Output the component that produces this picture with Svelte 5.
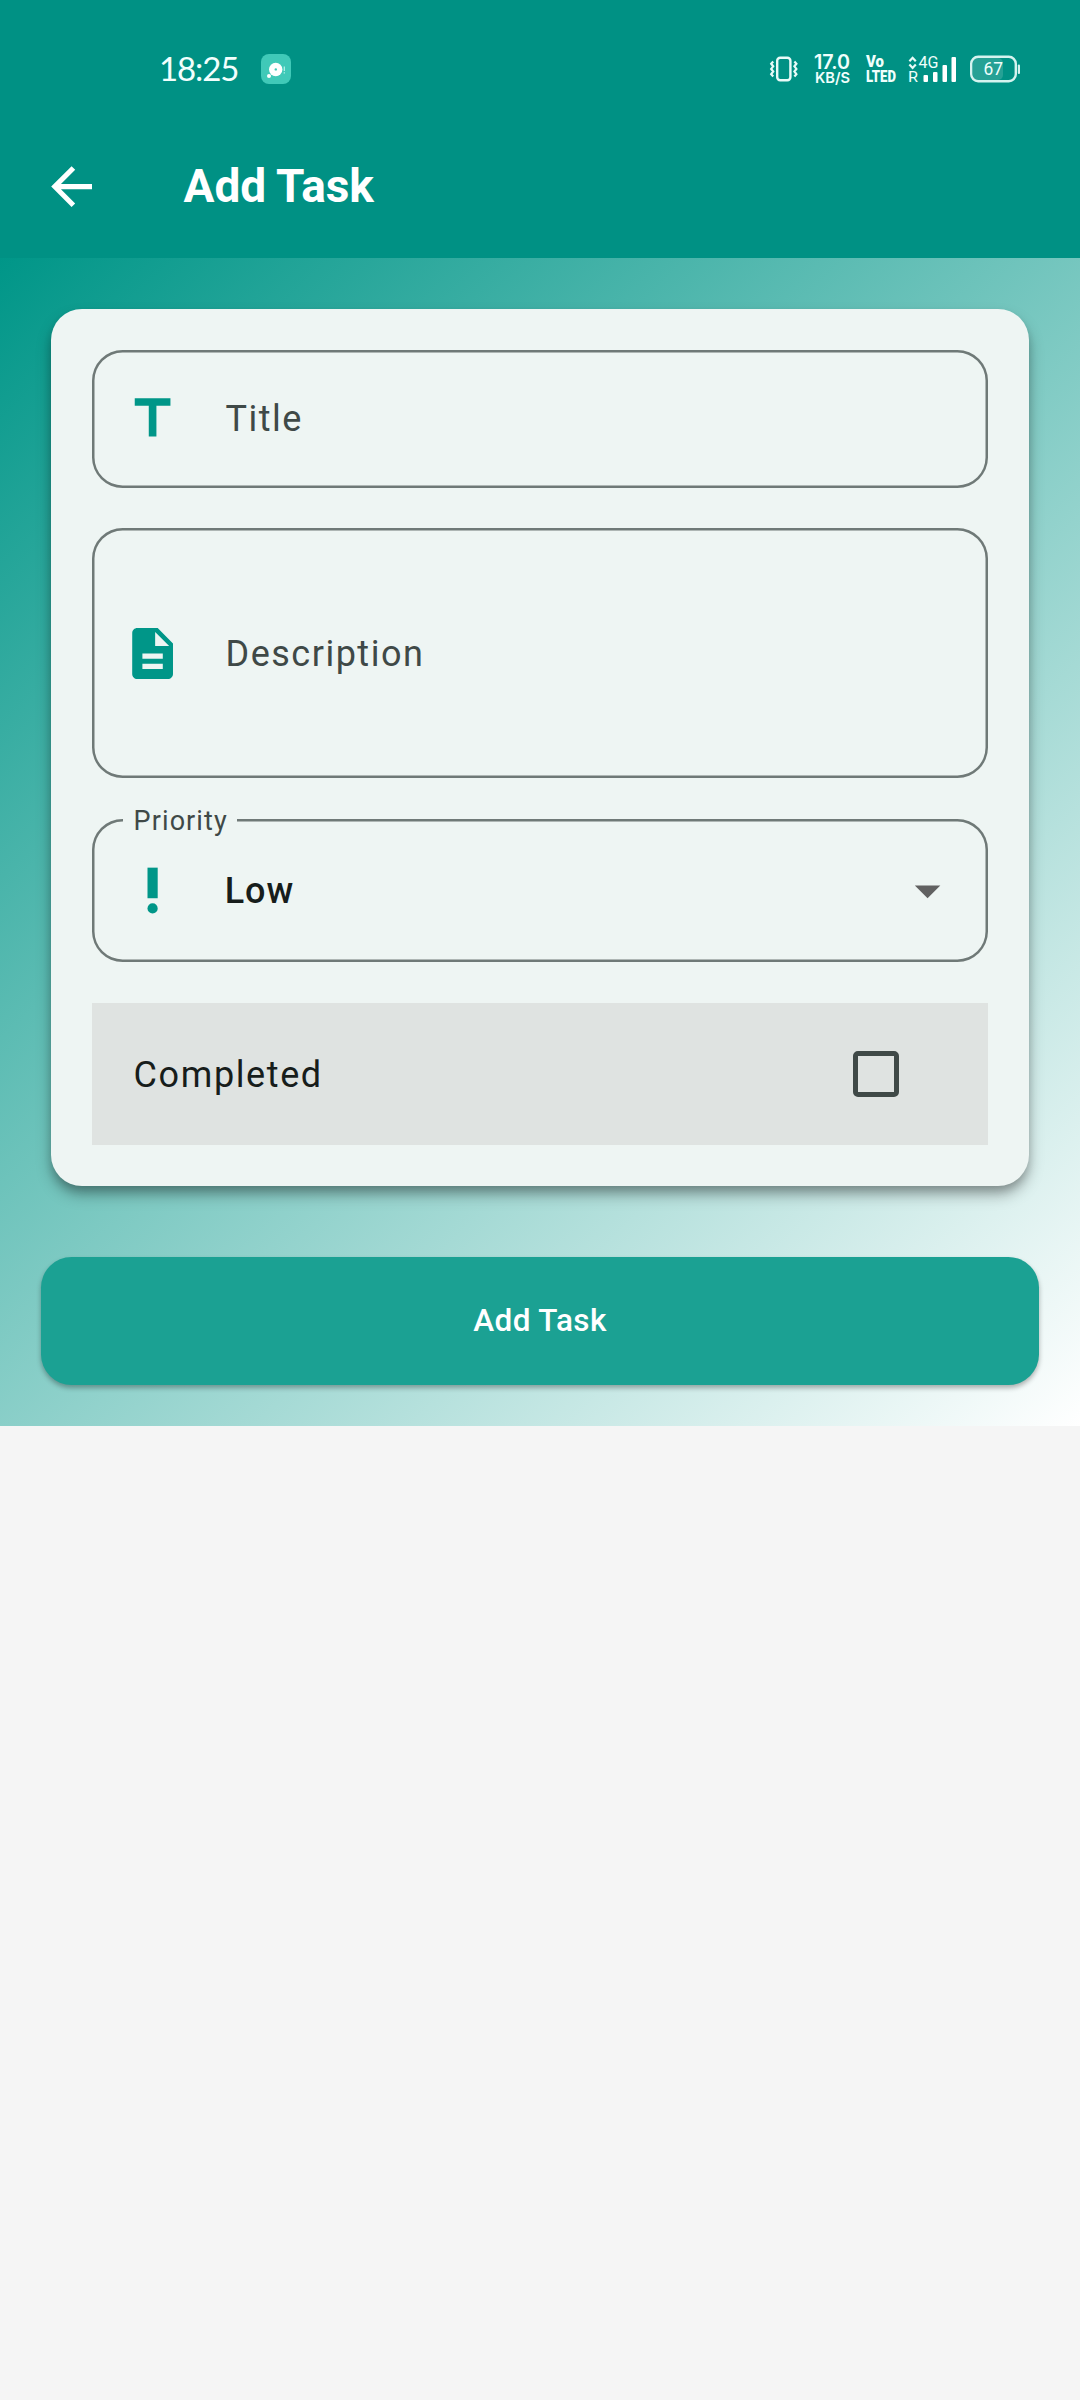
<script>
  let completed = $state(false);
  const bars = [
    { x: 15.5, h: 7 },
    { x: 25, h: 10 },
    { x: 34.5, h: 17 },
    { x: 43.5, h: 25 }
  ];
</script>

<div class="screen">
  <header>
    <div class="status">
      <span class="clock">18:25</span>
      <svg class="notice" viewBox="0 0 30 30">
        <rect width="30" height="30" rx="8" fill="#40c9b8" />
        <circle cx="14.7" cy="15.5" r="6.7" fill="#fff" />
        <circle cx="14.8" cy="15.4" r="1.2" fill="#40c9b8" />
        <circle cx="8" cy="22" r="2" fill="#fff" />
        <path d="M23.3 12.5v4.5M23.3 18.2v1.4" stroke="#b9f3ea" stroke-width="1.2" />
      </svg>
      <div class="indicators">
        <svg class="vibrate" viewBox="0 0 28 28" fill="none" stroke="#e9fbf8">
          <rect x="7.2" y="2.7" width="13.2" height="22.6" rx="3" stroke-width="2.4" />
          <path d="M3.2 6.5l-2 2.2 2 2.6-2 2.6 2 2.6-2 2.6 2 2.4M24.4 6.5l2 2.2-2 2.6 2 2.6-2 2.6 2 2.6-2 2.4" stroke-width="2.2" />
        </svg>
        <svg class="speed" viewBox="0 0 36 30">
          <text x="0" y="14.600" textLength="36" lengthAdjust="spacingAndGlyphs" class="rate">17.0</text>
          <text x="1" y="28.800" textLength="35" lengthAdjust="spacingAndGlyphs" class="unit">KB/S</text>
        </svg>
        <svg class="volte" viewBox="0 0 31 28">
          <text x="0" y="12.300" textLength="18" lengthAdjust="spacingAndGlyphs" class="vo">Vo</text>
          <text x="0" y="26.500" textLength="30" lengthAdjust="spacingAndGlyphs" class="vo">LTED</text>
        </svg>
        <svg class="signal" viewBox="0 0 50 28">
          <path d="M1.400 6.200l3.200-3.400 3.200 3.400M1.400 9.600l3.200 3.400 3.200-3.400" fill="none" stroke="#e9fbf8" stroke-width="2.200" />
          <text x="10.500" y="13.400" textLength="20" lengthAdjust="spacingAndGlyphs" class="net">4G</text>
          <text x="0" y="27" textLength="10" lengthAdjust="spacingAndGlyphs" class="roam">R</text>
          {#each bars as bar}
            <rect x={bar.x} y={27 - bar.h} width="4.500" height={bar.h} rx="1" fill="#fff" />
          {/each}
        </svg>
        <svg class="battery" viewBox="0 0 51 28">
          <rect x="3" y="3" width="30" height="22" rx="5" fill="#26a195" />
          <rect x="1.200" y="1.800" width="44.600" height="24.400" rx="7" fill="none" stroke="#d5f3ef" stroke-width="2.400" />
          <rect x="47.800" y="9.500" width="2.200" height="9.500" rx="1" fill="#d5f3ef" />
          <text x="13.500" y="20.300" textLength="19.500" lengthAdjust="spacingAndGlyphs" class="charge">67</text>
        </svg>
      </div>
    </div>
    <div class="appbar">
      <svg class="icon back" viewBox="0 0 24 24"><path d="M20 11H7.830l5.590-5.590L12 4l-8 8 8 8 1.410-1.410L7.830 13H20z" /></svg>
      <h1>Add Task</h1>
    </div>
  </header>

  <main>
    <section class="card">
      <div class="field title">
        <svg class="icon" viewBox="0 0 24 24"><path d="M5 4v3h5.500v12h3V7H19V4z" /></svg>
        <span class="hint">Title</span>
      </div>
      <div class="field description">
        <svg class="icon" viewBox="0 0 24 24"><path d="M14 2H6c-1.100 0-1.990.9-1.990 2L4 20c0 1.100.890 2 1.990 2H18c1.100 0 2-.9 2-2V8l-6-6zm2 16H8v-2h8v2zm0-4H8v-2h8v2zm-3-5V3.500L18.500 9H13z" /></svg>
        <span class="hint">Description</span>
      </div>
      <div class="field priority">
        <span class="label">Priority</span>
        <svg class="icon" viewBox="0 0 24 24"><circle cx="12" cy="19" r="2" /><path d="M10 3h4v12h-4z" /></svg>
        <span class="value">Low</span>
        <svg class="icon arrow" viewBox="0 0 24 24"><path d="M7 10l5 5 5-5z" /></svg>
      </div>
      <div class="completed">
        <span>Completed</span>
        <button class="box" class:on={completed} aria-label="Completed" onclick={() => (completed = !completed)}></button>
      </div>
    </section>
    <button class="submit">Add Task</button>
  </main>
</div>

<style>
  :global(body) {
    background: #f5f5f5;
  }
  .screen {
    width: 1080px;
    height: 2400px;
    background: #f5f5f5;
    font-family: Roboto, sans-serif;
    color: #171d1b;
  }
  .screen * {
    box-sizing: border-box;
  }
  svg {
    display: block;
    flex: none;
    overflow: visible;
  }
  header {
    height: 257.5px;
    background: #009184;
  }
  .status {
    height: 115px;
    padding: 23px 59px 0 159px;
    display: flex;
    align-items: center;
    color: #fff;
  }
  .clock {
    width: 102px;
    padding-bottom: 2px;
    font: 400 33px/40px Lato, sans-serif;
    letter-spacing: -1.1px;
    color: #f2fffd;
  }
  .notice {
    width: 30px;
    height: 30px;
  }
  .indicators {
    margin-left: auto;
    display: flex;
    align-items: center;
  }
  .vibrate {
    width: 28px;
    height: 28px;
    margin-right: 16px;
  }
  .speed {
    width: 36px;
    height: 30px;
    margin-right: 16px;
  }
  .volte {
    width: 31px;
    height: 28px;
    margin-right: 11px;
  }
  .signal {
    width: 50px;
    height: 28px;
    margin-right: 12px;
  }
  .battery {
    width: 51px;
    height: 28px;
  }
  .rate,
  .unit {
    font-family: Inter, sans-serif;
    font-weight: 600;
    fill: #f0fffc;
  }
  .rate {
    font-size: 19.5px;
  }
  .unit {
    font-size: 15px;
  }
  .vo {
    font-family: Roboto, sans-serif;
    font-size: 16.5px;
    font-weight: 900;
    fill: #f0fffc;
  }
  .net,
  .roam,
  .charge {
    font-family: Roboto, sans-serif;
    fill: #f0fffc;
  }
  .net {
    font-size: 17px;
  }
  .roam {
    font-size: 15px;
  }
  .charge {
    font-size: 18.5px;
    font-weight: 400;
  }
  .appbar {
    height: 142.8px;
    padding-left: 40.8px;
    display: flex;
    align-items: center;
  }
  .icon {
    width: 61.2px;
    height: 61.2px;
    fill: #009688;
  }
  .back {
    fill: #fff;
  }
  h1 {
    margin: 0 0 0 81.6px;
    font-size: 46px;
    line-height: 56px;
    font-weight: 700;
    letter-spacing: -0.1px;
    color: #fff;
  }
  main {
    height: 1168px;
    padding: 51px 40.8px 41px;
    background: linear-gradient(137.24deg, #009688, #fff);
  }
  .card {
    height: 877.5px;
    margin: 0 10.2px;
    padding: 41px 40.8px;
    border-radius: 31px;
    background: #eef5f3;
    box-shadow:
      0 9px 15px -1px rgba(0, 0, 0, 0.34),
      0 5px 9px -1px rgba(0, 0, 0, 0.14);
  }
  .field {
    position: relative;
    padding: 0 30.6px;
    display: flex;
    align-items: center;
    border-radius: 30.6px;
    box-shadow: inset 0 0 0 2.5px #6f7977;
  }
  .title {
    height: 138px;
  }
  .description {
    height: 250px;
    margin-top: 40.8px;
  }
  .priority {
    height: 143px;
    margin-top: 40.8px;
  }
  .hint {
    margin-left: 42px;
    padding-top: 1px;
    font-size: 36px;
    letter-spacing: 1.5px;
    color: #3f4947;
  }
  .value {
    margin-left: 41.2px;
    font-size: 36px;
    font-weight: 500;
    letter-spacing: 0.9px;
  }
  .arrow {
    margin-right: -0.6px;
    margin-left: auto;
    fill: #616161;
  }
  .label {
    position: absolute;
    left: 31px;
    top: -14.5px;
    padding: 0 9.5px 0 10.8px;
    background: #eef5f3;
    font-size: 27px;
    line-height: 32px;
    letter-spacing: 1.1px;
    color: #3f4947;
  }
  .completed {
    height: 142.5px;
    margin-top: 40.8px;
    padding: 0 89px 0 41.8px;
    display: flex;
    align-items: center;
    justify-content: space-between;
    background: #dfe3e1;
    font-size: 36px;
    letter-spacing: 1.6px;
  }
  .completed span {
    padding-top: 1px;
  }
  .box {
    width: 46px;
    height: 46px;
    padding: 0;
    border: 5px solid #3f4947;
    border-radius: 5px;
    background: none;
  }
  .box.on {
    background: #009688;
  }
  .submit {
    width: 998.4px;
    height: 127.5px;
    margin-top: 71.4px;
    padding: 0;
    display: flex;
    align-items: center;
    justify-content: center;
    border: 0;
    border-radius: 30.6px;
    background: #1ba193;
    box-shadow: 0 3px 5px rgba(0, 0, 0, 0.3);
    font: 500 31.5px/40px Roboto, sans-serif;
    letter-spacing: 0.4px;
    color: #fff;
  }
</style>
